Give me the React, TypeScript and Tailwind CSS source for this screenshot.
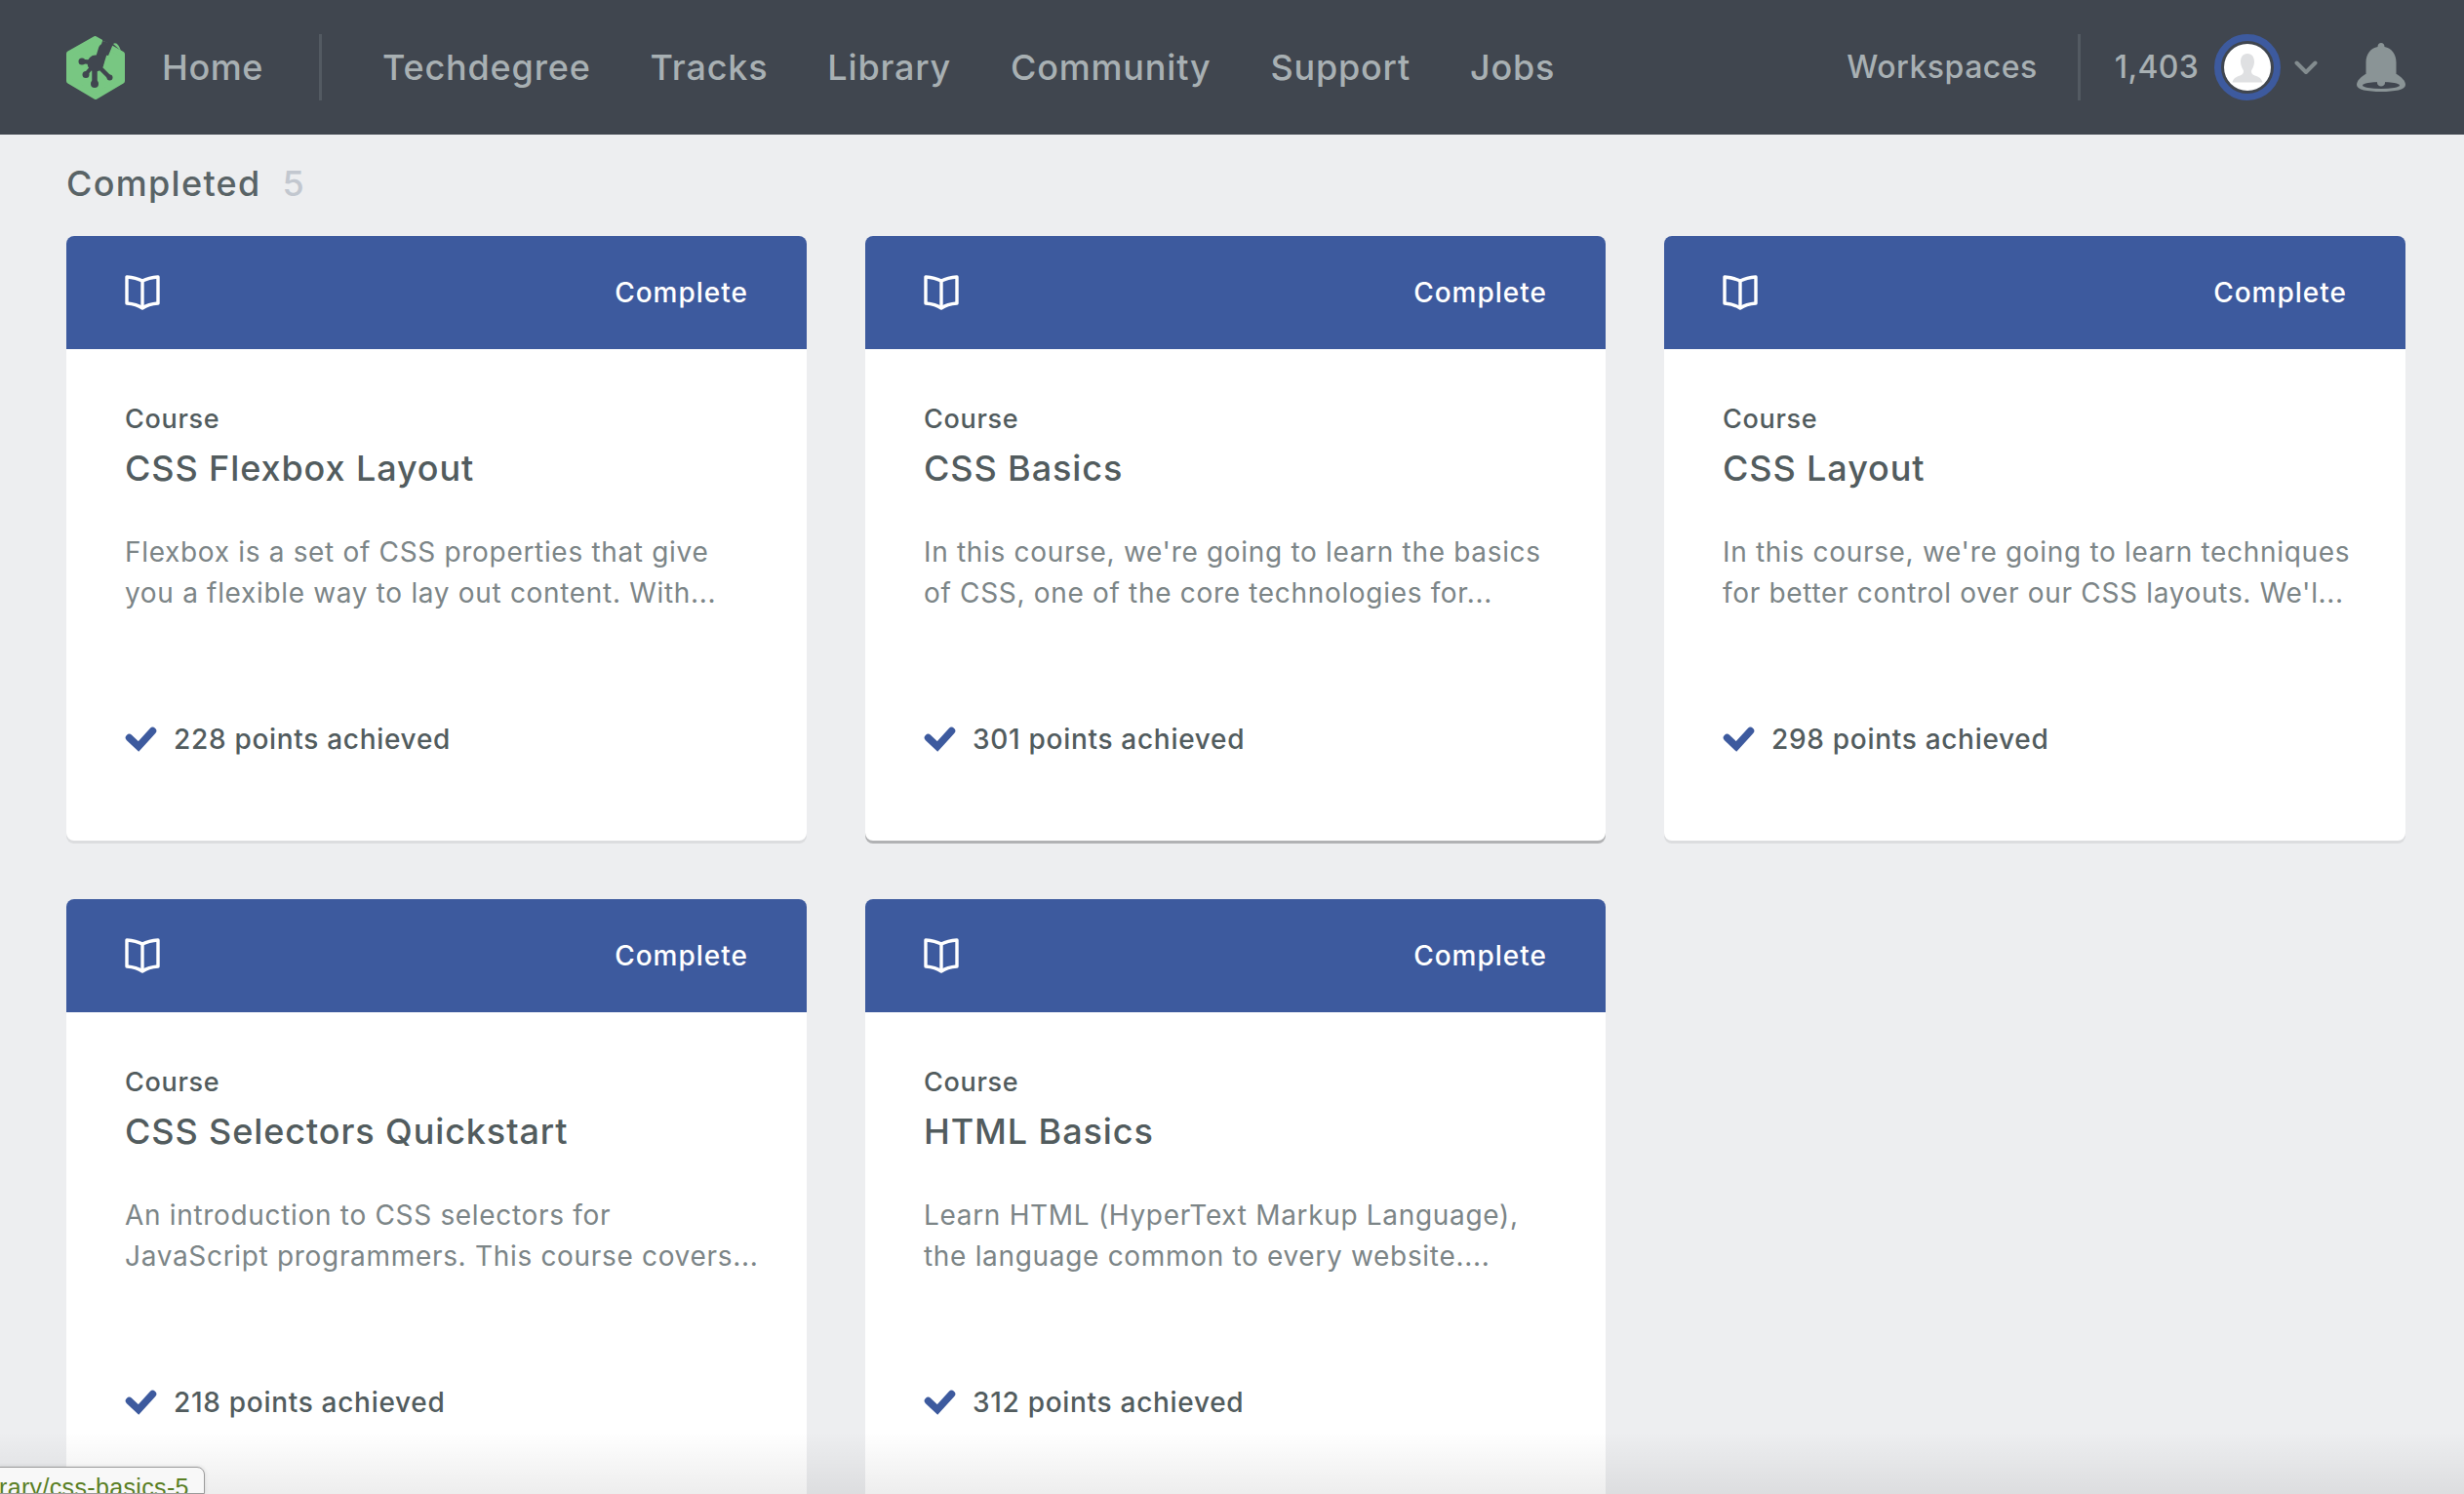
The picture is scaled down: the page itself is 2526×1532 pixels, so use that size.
import React, { FC } from "react";

const FONT = "font-['Inter','Noto_Sans',sans-serif]";

const COURSES = [
  { title: "CSS Flexbox Layout", line1: "Flexbox is a set of CSS properties that give", line2: "you a flexible way to lay out content. With...", points: 228 },
  { title: "CSS Basics", line1: "In this course, we're going to learn the basics", line2: "of CSS, one of the core technologies for...", points: 301, hover: true },
  { title: "CSS Layout", line1: "In this course, we're going to learn techniques", line2: "for better control over our CSS layouts. We'l...", points: 298 },
  { title: "CSS Selectors Quickstart", line1: "An introduction to CSS selectors for", line2: "JavaScript programmers. This course covers...", points: 218 },
  { title: "HTML Basics", line1: "Learn HTML (HyperText Markup Language),", line2: "the language common to every website....", points: 312 },
];

const NAV_LINKS = ["Techdegree", "Tracks", "Library", "Community", "Support", "Jobs"];

const Logo: FC = () => (
  <svg viewBox="0 0 60 65" className="w-[60px] h-[65px] shrink-0">
    <path d="M29.500 3 57 18.500V46L30 62 3 46V18z" fill="#78c782" stroke="#78c782" strokeWidth={6} strokeLinejoin="round" />
    <g stroke="#40464f" fill="none" strokeLinecap="round">
      <path d="M28 27 16 26" strokeWidth={4.500} />
      <path d="M27 31 20 39" strokeWidth={4} />
      <path d="M29 32v17" strokeWidth={5.500} />
      <path d="M33 31 44 42" strokeWidth={4.500} />
      <path d="M34 26 38 13" strokeWidth={10} />
    </g>
    <path d="M33 18 37 5 48 8 43 20z" fill="#40464f" />
    <path d="M37 5 38 -2H60V14L48 8z" fill="#40464f" />
    <g fill="#40464f">
      <circle cx="30" cy="28" r="8.500" />
      <circle cx="16" cy="26" r="3.500" />
      <circle cx="20" cy="39.500" r="3.500" />
      <circle cx="29" cy="49" r="4" />
      <circle cx="44.500" cy="42.500" r="3" />
    </g>
    <path d="M48 8c3-2 6 0 9 10.500V16L48 8z" fill="#78c782" />
  </svg>
);

const BookIcon: FC = () => (
  <svg viewBox="0 0 36 37" className="w-9 h-[37px] text-white" fill="none" stroke="currentColor" strokeWidth={3.400} strokeLinejoin="round">
    <path d="M18 6C13 3.500 8 2.500 2 2v27c6 .5 11 1.500 16 5 5-3.500 10-4.500 16-5V2c-6 .5-11 1.500-16 4z" />
    <path d="M18 6v28" />
  </svg>
);

const CheckIcon: FC = () => (
  <svg viewBox="0 0 33 27" className="w-[33px] h-[27px] text-[#3d5a9e]" fill="none" stroke="currentColor" strokeWidth={7.500} strokeLinecap="round" strokeLinejoin="miter">
    <path d="M4.500 11.500 14 20.500 28.500 4.500" />
  </svg>
);

const Chevron: FC = () => (
  <svg viewBox="0 0 24 15" className="w-6 h-[15px] text-[#838c8f]" fill="none" stroke="currentColor" strokeWidth={4} strokeLinecap="round" strokeLinejoin="round">
    <path d="M2.500 2.500 12 12l9.500-9.500" />
  </svg>
);

const Bell: FC = () => (
  <svg viewBox="0 0 50 50" className="w-[50px] h-[50px] text-[#8a9496]" fill="currentColor">
    <path d="M25 0c2 0 3.500 1.500 3.500 4 7 1.500 12 7 12 16v16H9.500V20C9.500 11 14.500 5.500 21.500 4 21.500 1.500 23 0 25 0z" />
    <path d="M9 32h32c5 3 9 7 9 11 0 5-11 7-25 7S0 48 0 43c0-4 4-8 9-11z" />
    <ellipse cx="25" cy="43.500" rx="19" ry="3.500" fill="#40464f" />
    <path d="M21 39h8v2c0 2-2 3.500-4 3.500s-4-1.500-4-3.500z" />
  </svg>
);

const Avatar: FC = () => (
  <div className="w-[68px] h-[68px] rounded-full border-[7px] border-[#3d5a9e] flex items-center justify-center ml-4">
    <div className="w-12 h-12 rounded-full bg-white overflow-hidden">
      <svg viewBox="0 0 48 48" className="w-12 h-12 text-[#dfe0e2]" fill="currentColor">
        <path d="M24 10c5 0 7 4 7 8.500 0 4-2 7-3 9 0 3 1 4 5 5.500 4 1.500 5.500 3 6.500 6.500h-31c1-3.500 2.500-5 6.500-6.500 4-1.500 5-2.500 5-5.500-1-2-3-5-3-9C17 14 19 10 24 10z" />
      </svg>
    </div>
  </div>
);

const CourseCard: FC<(typeof COURSES)[number]> = ({ title, line1, line2, points, hover }) => (
  <div className={`h-[620px] rounded-lg bg-white flex flex-col ${hover ? "shadow-[0_3px_0_#b1b2b4]" : "shadow-[0_3px_0_#dcdddf]"}`}>
    <div className="h-[116px] rounded-t-lg bg-[#3d5a9e] flex items-center justify-between px-[60px]">
      <BookIcon />
      <span className="text-[28px] tracking-[1px] font-medium text-white">Complete</span>
    </div>
    <div className="px-[60px] pt-[54px] text-[#525c5e]">
      <p className="text-[27px] tracking-[0.7px] leading-[36px] font-medium">Course</p>
      <h3 className="text-[36px] tracking-[0.9px] leading-[48px] mt-2 font-medium">{title}</h3>
      <p className="text-[28px] tracking-[0.68px] leading-[42px] mt-[41px] text-[#7c8587] whitespace-nowrap">
        {line1}
        <br />
        {line2}
      </p>
      <div className="flex items-center gap-[17px] mt-[108px] text-[28px] tracking-[0.7px] font-medium">
        <CheckIcon />
        <span>{points} points achieved</span>
      </div>
    </div>
  </div>
);

const App: FC = () => (
  <div className={`${FONT} relative h-[1532px] overflow-hidden bg-[#edeef0]`}>
    <header className="h-[138px] bg-[#40464f] flex items-center justify-between pl-[68px] pr-[60px] text-[#a8b0b3]">
      <div className="flex items-center">
        <Logo />
        <a className="ml-[38px] text-[36px] tracking-[0.6px] font-medium">Home</a>
        <div className="w-[3px] h-[68px] bg-[#535a62] ml-[57px]" />
        <nav className="flex items-center gap-[61px] ml-[62px] text-[36px] tracking-[0.8px] font-medium">
          {NAV_LINKS.map((link) => (
            <a key={link}>{link}</a>
          ))}
        </nav>
      </div>
      <div className="flex items-center">
        <a className="text-[32px] tracking-[0.5px] font-medium">Workspaces</a>
        <div className="w-[3px] h-[68px] bg-[#535a62] ml-[41px] mr-[35px]" />
        <span className="text-[32px] tracking-[0.3px] font-medium">1,403</span>
        <Avatar />
        <div className="ml-3.5">
          <Chevron />
        </div>
        <div className="ml-10">
          <Bell />
        </div>
      </div>
    </header>

    <main className="px-[68px] pt-[26px]">
      <h2 className="text-[36px] tracking-[1.3px] leading-[48px] font-medium text-[#596366]">
        Completed<span className="ml-[22px] text-[#c2c7cf]">5</span>
      </h2>
      <div className="grid grid-cols-[759px_759px_760px] gap-[60px] mt-[30px]">
        {COURSES.map((course) => (
          <CourseCard key={course.title} {...course} />
        ))}
      </div>
    </main>

    {/* fade over the bottom edge of the window */}
    <div className="absolute left-0 right-0 bottom-0 h-16 bg-gradient-to-b from-black/0 to-black/[0.07]" />

    {/* browser link preview */}
    <div className="absolute left-[-2px] bottom-0 w-[212px] h-[28px] bg-[#f8f8f8] border border-[#9b9b9b] rounded-tr-lg overflow-hidden whitespace-nowrap text-right pr-[16px] pt-[5px] shadow-[0_0_4px_rgba(0,0,0,0.12)]">
      <span className="block font-['Liberation_Sans',sans-serif] text-[25px] tracking-[0.35px] leading-[30px] text-[#5a7f25]">rary/css-basics-5</span>
    </div>
  </div>
);

export default App;
